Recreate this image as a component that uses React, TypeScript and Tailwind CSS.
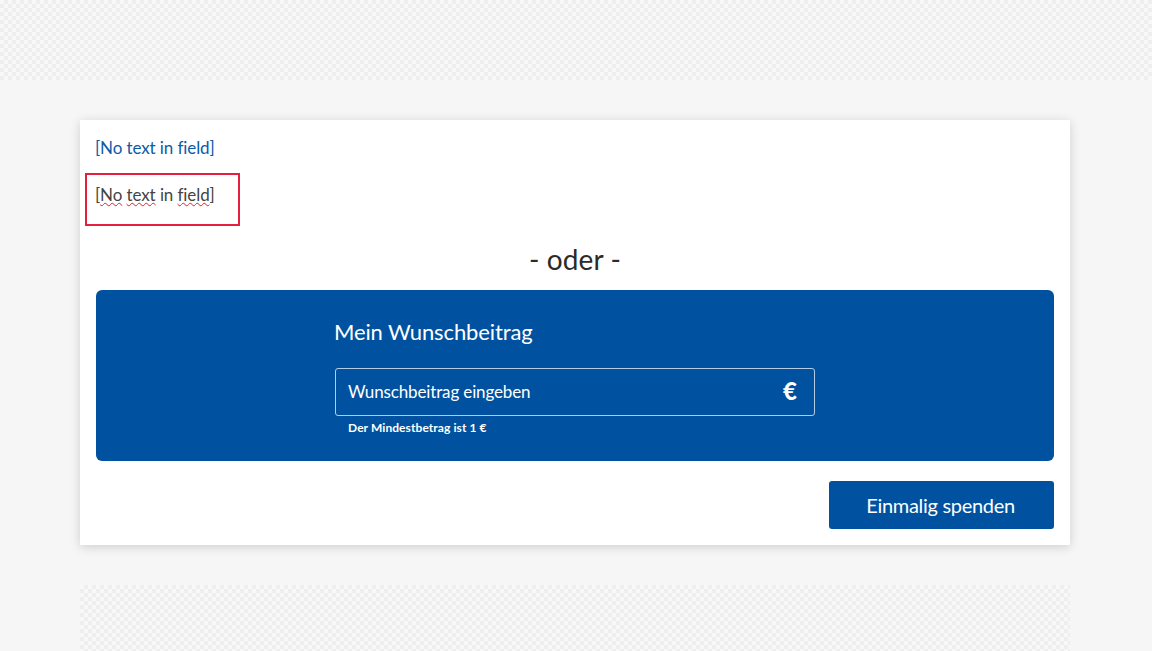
export default function App() {
  const pattern =
    "bg-[repeating-conic-gradient(#eeeeee_0_25%,#f8f8f8_0_50%)] bg-[length:8px_8px]";
  const wavy = "underline decoration-wavy decoration-[#d8232f] decoration-1 underline-offset-1";
  return (
    <div className="h-[651px] w-[1152px] overflow-hidden bg-[#f6f6f6] font-['Lato','Liberation_Sans',sans-serif] text-[#333333]">
      <div className={`h-20 ${pattern}`} />
      <main className="mx-20 mt-10 w-[990px]">
        <section className="h-[425px] bg-white px-4 pt-[17px] shadow-[0_2px_10px_rgba(0,0,0,0.16)]">
          <a className="-ml-px block text-[17px] leading-[22px] tracking-[-0.1px] text-[#0d5aa7]">[No text in field]</a>
          <div className="relative mt-[25px] h-[22px] text-[17px] leading-[22px] tracking-[-0.1px] text-[#444444]">
            <span className="-ml-px">[</span>
            <span className={wavy}>No</span> <span className={wavy}>text</span> in{" "}
            <span className={wavy}>field</span>]
            <div className="absolute top-[-11px] left-[-11px] h-[53px] w-[155px] border-2 border-[#e5203f]" />
          </div>
          <h2 className="mt-[36px] h-[34px] text-center text-[28px] leading-[34px] tracking-[0.1px] text-[#2b2b2b]">
            - oder -
          </h2>
          <div className="mt-[14px] flex h-[171px] justify-center rounded-md bg-[#0052a0] pt-[28px] text-white">
            <div className="w-[480px]">
              <h3 className="-ml-px h-[28px] text-[22px] leading-[28px] tracking-[-0.12px]">Mein Wunschbeitrag</h3>
              <div className="mt-[22px] flex h-12 items-center justify-between rounded-[3px] border border-[#b5cde4] pr-[17px] pl-3">
                <span className="text-[17px] tracking-[-0.14px]">Wunschbeitrag eingeben</span>
                <span className="-mt-[3px] text-[24px] leading-none font-black">€</span>
              </div>
              <p className="mt-[4px] pl-[13px] text-[12px] leading-4 font-bold tracking-[0.08px]">Der Mindestbetrag ist 1 €</p>
            </div>
          </div>
          <div className="mt-5 flex justify-end">
            <button className="h-12 w-[225px] rounded-[3px] bg-[#0052a0] pr-[2px] text-[20px] tracking-[-0.3px] text-white">
              Einmalig spenden
            </button>
          </div>
        </section>
        <div className={`mt-10 h-[66px] ${pattern}`} />
      </main>
    </div>
  );
}
